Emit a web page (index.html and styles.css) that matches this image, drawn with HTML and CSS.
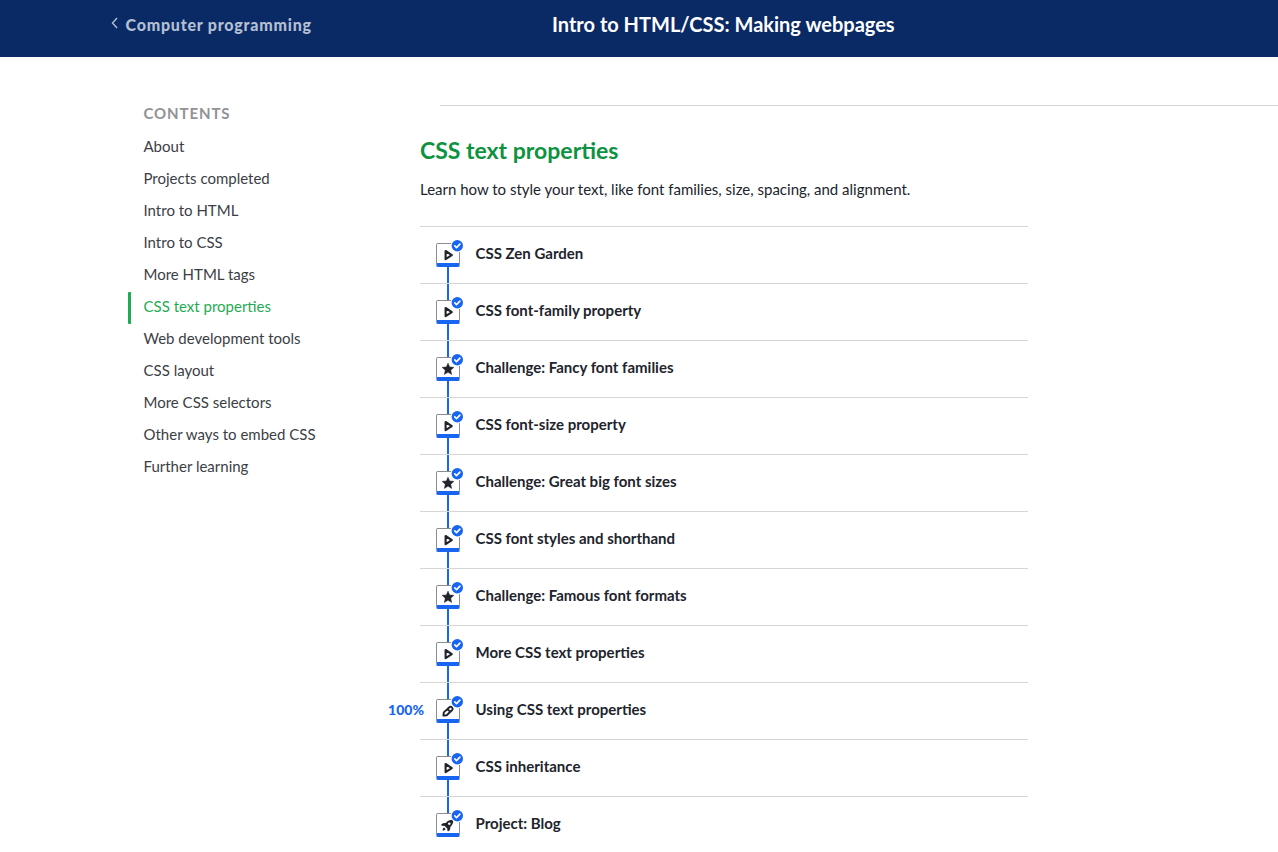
FILE: index.html
```html
<!DOCTYPE html>
<html lang="en">
<head>
    <meta charset="UTF-8">
    <meta name="viewport" content="width=device-width, initial-scale=1.0">
    <title>CSS text properties | Intro to HTML/CSS: Making webpages</title>
    <link rel="stylesheet" href="styles.css">
</head>
<body>
    <svg class="sprite" width="0" height="0">
        <symbol id="play" viewBox="0 0 24 24">
            <path d="M9.600 8v8.200l6.200-4.100z" fill="none" stroke="#21242c" stroke-width="2.100" stroke-linejoin="round"/>
        </symbol>
        <symbol id="star" viewBox="0 0 24 24">
            <path d="M12 6l1.700 3.900 4.300.4-3.200 2.900.9 4.300-3.700-2.200-3.700 2.200.9-4.300-3.200-2.900 4.300-.4z" fill="#21242c" stroke="#21242c" stroke-width=".4" stroke-linejoin="round"/>
        </symbol>
        <symbol id="pencil" viewBox="0 0 24 24">
            <path d="M7.400 16.600l.4-3.200 5.600-5.200a1.800 1.800 0 0 1 2.400 0l.4.400a1.800 1.800 0 0 1 0 2.400l-5.500 5.300zM11.500 10.200l2.700 2.700" fill="none" stroke="#21242c" stroke-width="1.900" stroke-linejoin="round"/>
        </symbol>
        <symbol id="rocket" viewBox="0 0 24 24">
            <path fill-rule="evenodd" d="M17.200 6.800c.2 3.100-.7 5.300-2.900 7.100.1 1.800-.3 3.200-1.900 4.300-.7 0-1-.3-1-1l-.2-1.800-2.500-2.500-2.500-.1c-.8-.1-1.200-.5-.9-1.200 1-1.200 2.600-1.600 4.500-1.600 1.800-2.200 4.300-3.300 7.400-3.200zM13.300 9.400a1.300 1.300 0 1 0 .01 0z" fill="#21242c"/>
            <path d="M8.100 14.400l1.500 1.500c-.5 1.100-1.600 1.600-3.100 1.700.1-1.500.5-2.700 1.600-3.200z" fill="#21242c"/>
        </symbol>
        <symbol id="check" viewBox="0 0 14 14">
            <circle cx="7.300" cy="6.700" r="6.700" fill="#fff"/>
            <circle cx="7.300" cy="6.700" r="5.700" fill="#1865f2"/>
            <path d="M4.800 6.900l1.700 1.700 3.400-3.500" fill="none" stroke="#fff" stroke-width="1.600" stroke-linecap="round" stroke-linejoin="round"/>
        </symbol>
    </svg>

    <header class="header">
        <a class="back">
            <svg class="chevron" viewBox="0 0 8 12"><path d="M7 1L2.500 6 7 11" fill="none" stroke="currentColor" stroke-width="1.400"/></svg>
            <span>Computer programming</span>
        </a>
        <h1 class="course-title">Intro to HTML/CSS: Making webpages</h1>
    </header>

    <div class="page">
        <nav class="sidebar">
            <h2 class="sidebar-title">CONTENTS</h2>
            <ul class="contents">
                <li>About</li>
                <li>Projects completed</li>
                <li>Intro to HTML</li>
                <li>Intro to CSS</li>
                <li>More HTML tags</li>
                <li class="active">CSS text properties</li>
                <li>Web development tools</li>
                <li>CSS layout</li>
                <li>More CSS selectors</li>
                <li>Other ways to embed CSS</li>
                <li>Further learning</li>
            </ul>
        </nav>

        <main class="main">
            <hr class="divider">
            <h2 class="topic-title">CSS text properties</h2>
            <p class="topic-text">Learn how to style your text, like font families, size, spacing, and alignment.</p>
            <ul class="lessons">
                <li class="lesson"><div class="box"><svg class="icon"><use href="#play"/></svg><svg class="done"><use href="#check"/></svg></div><span>CSS Zen Garden</span></li>
                <li class="lesson"><div class="box"><svg class="icon"><use href="#play"/></svg><svg class="done"><use href="#check"/></svg></div><span>CSS font-family property</span></li>
                <li class="lesson"><div class="box"><svg class="icon"><use href="#star"/></svg><svg class="done"><use href="#check"/></svg></div><span>Challenge: Fancy font families</span></li>
                <li class="lesson"><div class="box"><svg class="icon"><use href="#play"/></svg><svg class="done"><use href="#check"/></svg></div><span>CSS font-size property</span></li>
                <li class="lesson"><div class="box"><svg class="icon"><use href="#star"/></svg><svg class="done"><use href="#check"/></svg></div><span>Challenge: Great big font sizes</span></li>
                <li class="lesson"><div class="box"><svg class="icon"><use href="#play"/></svg><svg class="done"><use href="#check"/></svg></div><span>CSS font styles and shorthand</span></li>
                <li class="lesson"><div class="box"><svg class="icon"><use href="#star"/></svg><svg class="done"><use href="#check"/></svg></div><span>Challenge: Famous font formats</span></li>
                <li class="lesson"><div class="box"><svg class="icon"><use href="#play"/></svg><svg class="done"><use href="#check"/></svg></div><span>More CSS text properties</span></li>
                <li class="lesson"><div class="box"><b class="score">100%</b><svg class="icon"><use href="#pencil"/></svg><svg class="done"><use href="#check"/></svg></div><span>Using CSS text properties</span></li>
                <li class="lesson"><div class="box"><svg class="icon"><use href="#play"/></svg><svg class="done"><use href="#check"/></svg></div><span>CSS inheritance</span></li>
                <li class="lesson"><div class="box"><svg class="icon"><use href="#rocket"/></svg><svg class="done"><use href="#check"/></svg></div><span>Project: Blog</span></li>
            </ul>
        </main>
    </div>
</body>
</html>
```
FILE: styles.css
```css
* {
    box-sizing: border-box;
}
body {
    margin: 0;
    height: 852px;
    overflow: hidden;
    background: #fff;
    color: #21242c;
    font-family: Lato, "Noto Sans", sans-serif;
    font-size: 15px;
}
h1, h2, p, ul {
    margin: 0;
    padding: 0;
}
ul {
    list-style: none;
}
.sprite {
    display: none;
}
.header {
    display: flex;
    height: 57px;
    padding: 13px 0 0 110px;
    background: #0a2a66;
    color: #fff;
}
.back {
    display: flex;
    width: 442px;
    gap: 7.5px;
    line-height: 24px;
    font-size: 16px;
    font-weight: 900;
    letter-spacing: 0.77px;
    color: #b3bfd3;
}
.chevron {
    width: 8px;
    height: 12px;
    margin-top: 4px;
}
.course-title {
    font-size: 20px;
    line-height: 23px;
    font-weight: bold;
    white-space: nowrap;
}
.page {
    display: flex;
}
.sidebar {
    width: 292px;
    margin-left: 128px;
    padding-top: 45px;
}
.sidebar-title {
    padding-left: 15.5px;
    font-size: 15px;
    line-height: 22px;
    letter-spacing: 0.9px;
    color: #909296;
}
.contents {
    padding-top: 8px;
}
.contents li {
    height: 32px;
    padding-left: 15.5px;
    line-height: 28px;
    color: #3b3e45;
}
.contents .active {
    padding-left: 12.5px;
    border-left: 3px solid #1fab54;
    border-radius: 1px;
    color: #1fab54;
}
.main {
    flex: 1;
    position: relative;
    z-index: 0;
}
.divider {
    height: 1px;
    margin: 48px 0 0 20px;
    border: none;
    background: #d6d6d8;
}
.topic-title {
    padding-top: 28px;
    font-size: 23px;
    line-height: 32px;
    color: #0d923f;
}
.topic-text {
    padding-top: 12px;
    line-height: 22px;
}
.lessons {
    width: 608px;
    margin-top: 26px;
}
.lesson {
    display: flex;
    height: 57px;
    padding: 16px 16px 0;
    border-top: 1px solid #d6d6d8;
    gap: 15.5px;
    font-weight: bold;
    line-height: 20px;
}
.box {
    position: relative;
    width: 24px;
    height: 24px;
    border: 1px solid #8a8c91;
    border-bottom: 4px solid #1865f2;
    border-radius: 2px;
    background: #fff;
}
/* connector running down to the next lesson */
.lesson:not(:last-child) .box::after {
    content: "";
    position: absolute;
    top: 23px;
    left: 10px;
    width: 2px;
    height: 33px;
    background: #1865f2;
    z-index: -1;
}
.icon {
    position: absolute;
    top: -1px;
    left: -1px;
    width: 24px;
    height: 24px;
}
.done {
    position: absolute;
    top: -5px;
    left: 13px;
    width: 14px;
    height: 14px;
    z-index: 1;
}
.score {
    position: absolute;
    top: 0;
    right: 35px;
    font-size: 14px;
    color: #1865f2;
}
```
